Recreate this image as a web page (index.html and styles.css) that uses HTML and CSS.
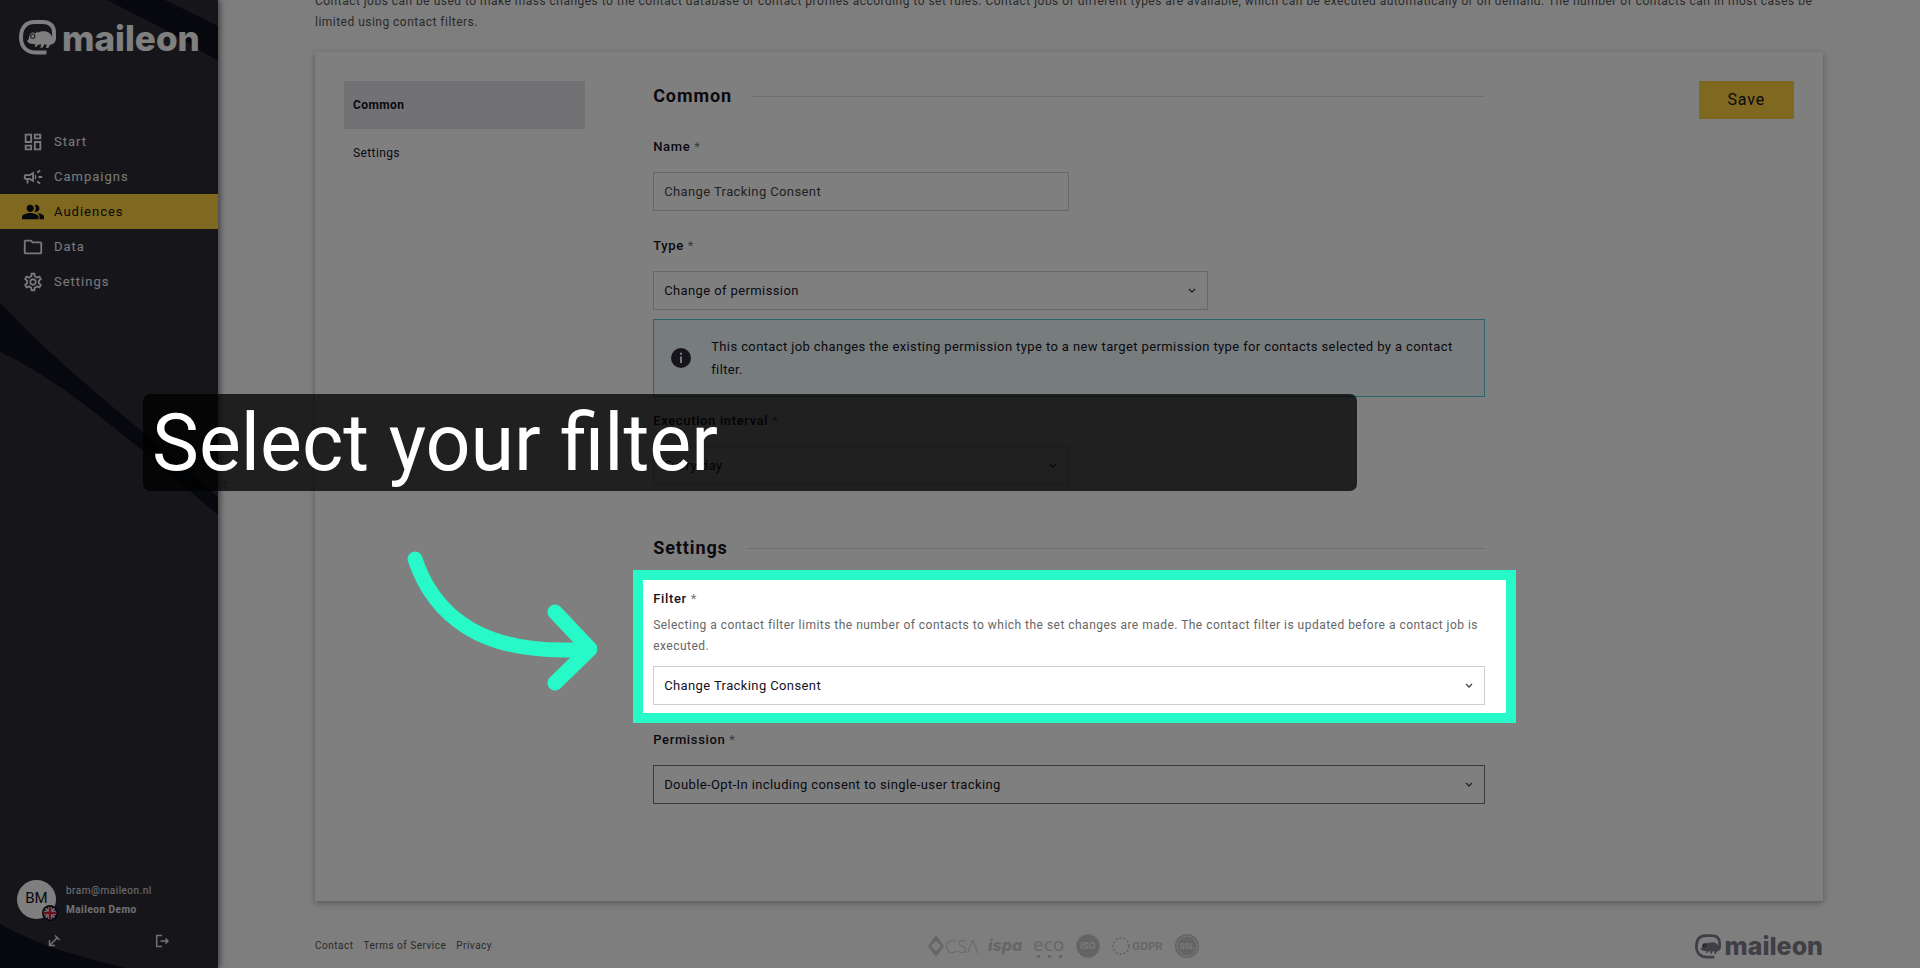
FILE: index.html
```html
<!DOCTYPE html>
<html lang="en">
<head>
<meta charset="utf-8">
<title>Maileon – Contact job</title>
<link rel="stylesheet" href="styles.css">
</head>
<body>
<svg class="defs" width="0" height="0" aria-hidden="true">
  <symbol id="mark" viewBox="0 0 37 35">
    <path fill="none" stroke="currentColor" stroke-width="4" d="M27.500 32.600H17.500C8 32.600 2 27 2 17.500 2 7.500 7 2 16 2h7.500C31 2 35 6 35 12.500V17"/>
    <path fill="currentColor" d="M37 13v5c0 4-2.500 6.500-6 6.800l-1.700 3.200h-2.300l.8-3.300-2.300-.4-2 3.500h-2.200l1-3.400-3.300.3-1.500 2h-1.700l.7-2.500c-3-.1-6.500-.5-8-2.400-.7-1 .2-2.200 1.300-2.600C10.100 15 11.700 12 14.500 12.500l2.400.9 1-2.200 1.100 1.500c3-1.700 7.500-2 10.500-.2 1.800 1 2.700 2.400 3.500 4.200z"/>
    <circle cx="13.700" cy="16.200" r="2.100" fill="none" stroke="#000" stroke-opacity=".65" stroke-width="1.300"/>
  </symbol>
  <symbol id="chev" viewBox="0 0 8 6"><path d="M1 1l3 3 3-3" fill="none" stroke="currentColor" stroke-width="1.300"/></symbol>
</svg>

<aside class="sidebar">
  <svg class="sidebar-art" viewBox="0 0 218 968" preserveAspectRatio="none" aria-hidden="true">
    <path d="M107 0h58l53 26v35L168 31zM0 303l17 17c36 37 80 74 126 112l75 65v18l-75-64C112 426 50 374 0 352zM0 924c40 22 80 33 127 44H0z"/>
  </svg>
  <a class="brand" href="#"><svg class="brand-mark"><use href="#mark"/></svg><span>maileon</span></a>
  <nav class="nav">
    <a href="#"><svg viewBox="0 0 24 24"><path d="M19 5v2h-4V5h4M9 5v6H5V5h4m10 8v6h-4v-6h4M9 17v2H5v-2h4M21 3h-8v6h8V3zM11 3H3v10h8V3zm10 8h-8v10h8V11zm-10 4H3v6h8v-6z"/></svg>Start</a>
    <a href="#"><svg viewBox="0 0 24 24"><path d="M18 11v2h4v-2h-4zm-2 6.610c.96.710 2.210 1.650 3.200 2.390.4-.53.800-1.070 1.200-1.600-.99-.740-2.240-1.680-3.200-2.400-.4.540-.8 1.080-1.200 1.610zM20.400 5.600c-.4-.53-.8-1.070-1.200-1.600-.99.740-2.240 1.680-3.200 2.400.4.530.8 1.070 1.200 1.600.96-.72 2.210-1.650 3.200-2.400zM4 9c-1.100 0-2 .9-2 2v2c0 1.100.9 2 2 2h1v4h2v-4h1l5 3V6L8 9H4zm5.030 1.710L11 9.530v4.940l-1.970-1.180-.48-.29H4v-2h4.550l.48-.29zM15.500 12c0-1.330-.58-2.530-1.500-3.350v6.690c.92-.81 1.500-2.010 1.500-3.340z"/></svg>Campaigns</a>
    <a href="#" class="active" aria-current="page"><svg viewBox="0 0 24 24"><path d="M16.670 13.130C18.040 14.060 19 15.320 19 17v3h5v-3c0-2.180-3.570-3.470-7.330-3.870zM15 12c2.210 0 4-1.790 4-4s-1.790-4-4-4c-.47 0-.91.1-1.330.24C14.500 5.270 15 6.580 15 8s-.5 2.730-1.330 3.760c.42.140.86.240 1.330.24zM9 12c2.210 0 4-1.790 4-4s-1.790-4-4-4-4 1.790-4 4 1.790 4 4 4zm0 1c-2.670 0-9 1.340-9 4v3h18v-3c0-2.660-6.330-4-9-4z"/></svg>Audiences</a>
    <a href="#"><svg viewBox="0 0 24 24"><path d="M9.170 6l2 2H20v10H4V6h5.170M10 4H4c-1.100 0-1.990.9-1.990 2L2 18c0 1.100.9 2 2 2h16c1.100 0 2-.9 2-2V8c0-1.100-.9-2-2-2h-8l-2-2z"/></svg>Data</a>
    <a href="#"><svg viewBox="0 0 24 24"><path d="M19.430 12.980c.04-.32.070-.64.070-.98s-.03-.66-.07-.98l2.110-1.650c.19-.15.240-.42.120-.64l-2-3.460c-.12-.22-.39-.3-.61-.22l-2.490 1c-.52-.4-1.080-.73-1.690-.98l-.38-2.650C14.460 2.180 14.250 2 14 2h-4c-.25 0-.46.180-.49.420l-.38 2.650c-.61.250-1.170.590-1.690.98l-2.490-1c-.23-.09-.49 0-.61.220l-2 3.460c-.13.220-.07.490.12.640l2.110 1.650c-.04.32-.07.65-.07.98s.03.660.07.980l-2.110 1.650c-.19.15-.24.420-.12.640l2 3.460c.12.220.390.3.610.220l2.490-1c.52.4 1.080.73 1.690.98l.38 2.650c.03.240.240.420.490.420h4c.25 0 .46-.18.490-.42l.38-2.650c.61-.25 1.170-.59 1.690-.98l2.490 1c.23.090.490 0 .61-.22l2-3.460c.12-.22.070-.49-.12-.64l-2.110-1.650zm-1.980-1.710c.04.310.050.520.050.730s-.02.430-.05.730l-.14 1.130.89.700 1.080.84-.7 1.210-1.270-.51-1.040-.42-.9.680c-.43.320-.84.560-1.250.73l-1.060.43-.16 1.130-.2 1.350h-1.400l-.19-1.350-.16-1.130-1.060-.43c-.43-.18-.83-.41-1.230-.71l-.91-.7-1.060.43-1.270.51-.7-1.210 1.080-.84.890-.7-.14-1.130c-.03-.31-.05-.54-.05-.74s.02-.43.050-.73l.14-1.130-.89-.7-1.080-.84.7-1.210 1.270.51 1.040.42.900-.68c.43-.32.840-.56 1.250-.73l1.060-.43.160-1.130.2-1.350h1.390l.19 1.350.16 1.130 1.060.43c.43.180.83.410 1.230.71l.91.700 1.060-.43 1.270-.51.700 1.210-1.070.85-.89.700.14 1.130zM12 8c-2.210 0-4 1.790-4 4s1.790 4 4 4 4-1.790 4-4-1.790-4-4-4zm0 6c-1.100 0-2-.9-2-2s.9-2 2-2 2 .9 2 2-.9 2-2 2z"/></svg>Settings</a>
  </nav>
  <svg class="edge" viewBox="0 0 8 10" aria-hidden="true"><path d="M6.500 1L2 5l4.500 4"/></svg>
  <div class="account">
    <div class="user">
      <div class="avatar">BM
        <svg class="flag" viewBox="0 0 16 16" aria-hidden="true"><circle cx="8" cy="8" r="8" fill="#0e101a"/><clipPath id="fc"><circle cx="8" cy="8" r="6.300"/></clipPath><g clip-path="url(#fc)"><path fill="#2b4c9b" d="M0 0h16v16H0z"/><path d="M2 2l12 12M14 2L2 14" stroke="#ddd" stroke-width="1.800"/><path d="M8 0v16M0 8h16" stroke="#eee" stroke-width="4"/><path d="M8 0v16M0 8h16" stroke="#d8203f" stroke-width="2.600"/></g></svg>
      </div>
      <div class="who"><span>bram@maileon.nl</span><strong>Maileon Demo</strong></div>
    </div>
    <div class="tools">
      <button type="button" aria-label="Collapse menu"><svg viewBox="0 0 14 14"><path d="M8 1.500l4.500 4.500M10.200 3.800L3 11M2.500 6v5.500H8"/></svg></button>
      <button type="button" aria-label="Log out"><svg viewBox="0 0 14 14"><path d="M7 1.500H1.700v11H7M5.500 7H13M10.500 4.500L13 7l-2.500 2.500"/></svg></button>
    </div>
  </div>
</aside>

<main class="main">
  <p class="intro">Contact jobs can be used to make mass changes to the contact database or contact profiles according to set rules. Contact jobs of different types are available, which can be executed automatically or on demand. The number of contacts can in most cases be limited using contact filters.</p>

  <form class="card">
    <nav class="tabs">
      <a href="#common" class="current">Common</a>
      <a href="#settings">Settings</a>
    </nav>
    <div class="form">
      <h2 id="common">Common</h2>
      <div class="field">
        <label for="name">Name <span class="req">*</span></label>
        <input class="control half" id="name" type="text" value="Change Tracking Consent">
      </div>
      <div class="field">
        <label for="type">Type <span class="req">*</span></label>
        <div class="pick wide"><select class="control" id="type"><option>Change of permission</option></select><svg><use href="#chev"/></svg></div>
      </div>
      <div class="info">
        <svg viewBox="0 0 20 20" aria-hidden="true"><circle cx="10" cy="10" r="10"/><path d="M9 4.800h2v2H9zM9 8.600h2v6.400H9z" fill="#eef8fb"/></svg>
        <p>This contact job changes the existing permission type to a new target permission type for contacts selected by a contact filter.</p>
      </div>
      <div class="field after-info">
        <label for="interval">Execution interval <span class="req">*</span></label>
        <div class="pick half"><select class="control" id="interval"><option>Every day</option></select><svg><use href="#chev"/></svg></div>
      </div>

      <h2 id="settings" class="second">Settings</h2>
      <div class="field spotlight">
        <label for="filter">Filter <span class="req">*</span></label>
        <p class="hint">Selecting a contact filter limits the number of contacts to which the set changes are made. The contact filter is updated before a contact job is executed.</p>
        <div class="pick"><select class="control" id="filter"><option>Change Tracking Consent</option></select><svg><use href="#chev"/></svg></div>
      </div>
      <div class="field">
        <label for="permission">Permission <span class="req">*</span></label>
        <div class="pick"><select class="control strong" id="permission"><option>Double-Opt-In including consent to single-user tracking</option></select><svg><use href="#chev"/></svg></div>
      </div>
    </div>
    <div class="actions"><button type="button" class="save">Save</button></div>
  </form>

  <footer class="footer">
    <div class="links"><a href="#">Contact</a><a href="#">Terms of Service</a><a href="#">Privacy</a></div>
    <svg class="certs" viewBox="0 0 282 26" role="img" aria-label="Certificates">
      <path fill-rule="evenodd" d="M8 2l8 11-8 11L0 13zM8 8l-5 5 5 5 5-5z"/>
      <text class="thin" x="17" y="20" font-size="18">CSΛ</text>
      <text class="ispa" x="60" y="18" font-size="16">ispa</text>
      <text class="eco" x="105" y="18" font-size="19">eco</text>
      <path d="M109 22h3v3h-3zM120 22h3v3h-3zM131 22h3v3h-3z"/>
      <circle class="seal" cx="160" cy="13" r="11"/><circle cx="160" cy="13" r="11" fill="none" stroke="#c8c8c8" stroke-width="2" stroke-dasharray="2 1"/>
      <text x="160" y="16" font-size="9" text-anchor="middle" class="inv">ISO</text>
      <circle cx="193" cy="13" r="8" fill="none" stroke="#cdcdcd" stroke-width="2" stroke-dasharray="2 2"/>
      <text class="gdpr" x="204" y="17" font-size="11">GDPR</text>
      <circle class="seal" cx="259" cy="13" r="12"/><circle cx="259" cy="13" r="10" fill="none" stroke="#f4f4f4"/>
      <text x="259" y="16" font-size="8" text-anchor="middle" class="inv">SSL</text>
    </svg>
    <a class="brand small" href="#"><svg class="brand-mark"><use href="#mark"/></svg><span>maileon</span></a>
  </footer>
</main>

<div class="caption">Select your filter</div>
<svg class="arrow" viewBox="0 0 194 144" aria-hidden="true"><path d="M12 12C30 66 76 110 184 102M152 65l35 37-35 34"/></svg>
</body>
</html>
```
FILE: styles.css
```css
* { box-sizing: border-box; }
body {
  margin: 0;
  display: grid;
  grid-template-columns: 218px 1fr;
  min-height: 100vh;
  height: 100vh;
  overflow: hidden;
  position: relative;
  font: 400 13px/20px Roboto, "Liberation Sans", sans-serif;
  letter-spacing: .03em;
  color: #14121f;
  background: #fcfcfc;
}
a { color: inherit; text-decoration: none; }
p { margin: 0; }
.defs { position: absolute; }

/* Sidebar */
.sidebar {
  position: relative;
  display: flex;
  flex-direction: column;
  background: #2d2c35;
  box-shadow: 2px 0 6px rgba(0, 0, 0, .5);
  color: #e4e4e6;
}
.sidebar-art { position: absolute; inset: 0; width: 100%; height: 100%; fill: #0e101a; }
.edge { position: absolute; left: 221px; top: 480px; width: 8px; height: 10px; fill: none; stroke: #777; }
.brand {
  position: relative;
  display: flex;
  align-items: center;
  gap: 6px;
  padding: 20px 0 0 19px;
  font: 800 35px/34px Inter, sans-serif;
  letter-spacing: normal;
  color: #fff;
}
.brand-mark { flex: none; width: 37px; height: 35px; }
.nav { position: relative; margin-top: 69px; letter-spacing: 1px; }
.nav a { display: flex; align-items: center; gap: 10px; height: 35px; padding-left: 22px; color: #f2f2f4; }
.nav svg { width: 22px; height: 22px; fill: currentColor; }
.nav .active { background: #fed03e; color: #0e101a; }
.account { position: relative; margin-top: auto; padding: 0 17px 19px; }
.user { display: flex; gap: 10px; align-items: center; }
.avatar {
  position: relative;
  width: 39px;
  height: 39px;
  border-radius: 50%;
  background: #fff;
  color: #14121f;
  font-size: 15px;
  line-height: 37px;
  text-align: center;
  letter-spacing: normal;
}
.flag { position: absolute; right: -2px; bottom: -2px; width: 16px; height: 16px; }
.who { display: flex; flex-direction: column; font-size: 10px; line-height: 19px; letter-spacing: .05em; }
.tools { display: flex; justify-content: center; gap: 92px; margin-top: 14px; }
.tools button { width: 16px; height: 16px; padding: 0; border: 0; background: none; color: #e4e4e6; }
.tools svg { display: block; width: 14px; height: 14px; fill: none; stroke: currentColor; stroke-width: 1.5; }

/* Page */
.main { margin-top: -9px; padding: 0 97px; min-width: 0; }
.intro { font-size: 12px; line-height: 21px; letter-spacing: .04em; color: #555; }
.card {
  display: grid;
  grid-template-columns: 29fr 100fr 29fr;
  gap: 68px;
  margin-top: 19px;
  padding: 29px 29px 97px;
  background: #fff;
  box-shadow: 0 2px 6px rgba(0, 0, 0, .3);
}
.tabs a { display: block; padding: 14px 9px; font-size: 12px; }
.tabs .current { background: #e5e5e9; font-weight: 700; }
.form h2 {
  display: flex;
  align-items: center;
  gap: 20px;
  margin: 0 0 26px;
  font-size: 18px;
  line-height: 30px;
  letter-spacing: .05em;
  font-weight: 700;
}
.form h2::after { content: ""; flex: 1; height: 1px; background: #dcdcdf; }
.form .second { margin-top: 48px; }
.field { position: relative; margin-top: 25px; }
.field label { display: block; margin-bottom: 15px; font-weight: 500; letter-spacing: .05em; }
.req { font-weight: 400; color: #777; }
.control {
  display: block;
  width: 100%;
  height: 39px;
  padding: 0 10px;
  border: 1px solid #cfcfd3;
  border-radius: 0;
  appearance: none;
  background: #fff;
  color: #14121f;
  font: inherit;
  letter-spacing: inherit;
}
input.control { color: #444; }
.half, .control.half { width: 50%; }
.wide { width: 66.67%; }
.control.strong { border-color: #777; }
.pick { position: relative; }
.pick svg { position: absolute; right: 12px; top: 17px; width: 8px; height: 6px; color: #444; }
.info {
  display: flex;
  align-items: center;
  gap: 20px;
  margin-top: 9px;
  padding: 15px 17px;
  border: 1px solid #54c8e0;
  background: #eef8fb;
  line-height: 23px;
}
.info svg { flex: none; width: 20px; height: 20px; fill: #2e2b36; }
.after-info { margin-top: 14px; }
.hint { margin: -9px 0 9px; font-size: 12px; line-height: 21px; letter-spacing: .04em; color: #666; }
.spotlight::after {
  content: "";
  position: absolute;
  inset: -19px -31px -18px -20px;
  border: 10px solid #27fac8;
  box-shadow: 0 0 0 2000px rgba(0, 0, 0, .5);
  pointer-events: none;
  z-index: 5;
}
.actions { text-align: right; }
.save {
  padding: 0 29px;
  border: 0;
  background: #fed03e;
  color: #14121f;
  font: 400 16px/38px Roboto, sans-serif;
  letter-spacing: .05em;
}

/* Footer */
.footer { display: grid; grid-template-columns: 1fr auto 1fr; align-items: center; margin-top: 32px; }
.links { display: flex; gap: 10px; font-size: 10px; letter-spacing: .05em; color: #555; }
.certs { width: 282px; height: 26px; fill: #cdcdcd; font-family: Inter, sans-serif; letter-spacing: normal; }
.certs .thin { font-family: Lato, sans-serif; font-weight: 300; }
.certs .ispa { font-weight: 800; font-style: italic; }
.certs .eco { font-family: "Open Sans", sans-serif; }
.certs .gdpr { font-weight: 700; }
.certs .seal { fill: #c8c8c8; }
.certs .inv { fill: #f4f4f4; font-weight: 700; }
.brand.small { justify-self: end; padding: 0; gap: 4px; font-size: 25px; line-height: 26px; color: #807e8c; }
.small .brand-mark { width: 26px; height: 25px; }

/* Guide overlay */
.caption {
  position: absolute;
  left: 143px;
  top: 394px;
  width: 1214px;
  padding: 2px 9px 0;
  border-radius: 7px;
  background: rgba(0, 0, 0, .75);
  color: #fff;
  font-size: 79px;
  line-height: 95px;
  letter-spacing: normal;
  z-index: 10;
}
.arrow {
  position: absolute;
  left: 403px;
  top: 547px;
  width: 194px;
  height: 144px;
  fill: none;
  stroke: #27fac8;
  stroke-width: 15;
  stroke-linecap: round;
  stroke-linejoin: round;
  z-index: 10;
}
```
